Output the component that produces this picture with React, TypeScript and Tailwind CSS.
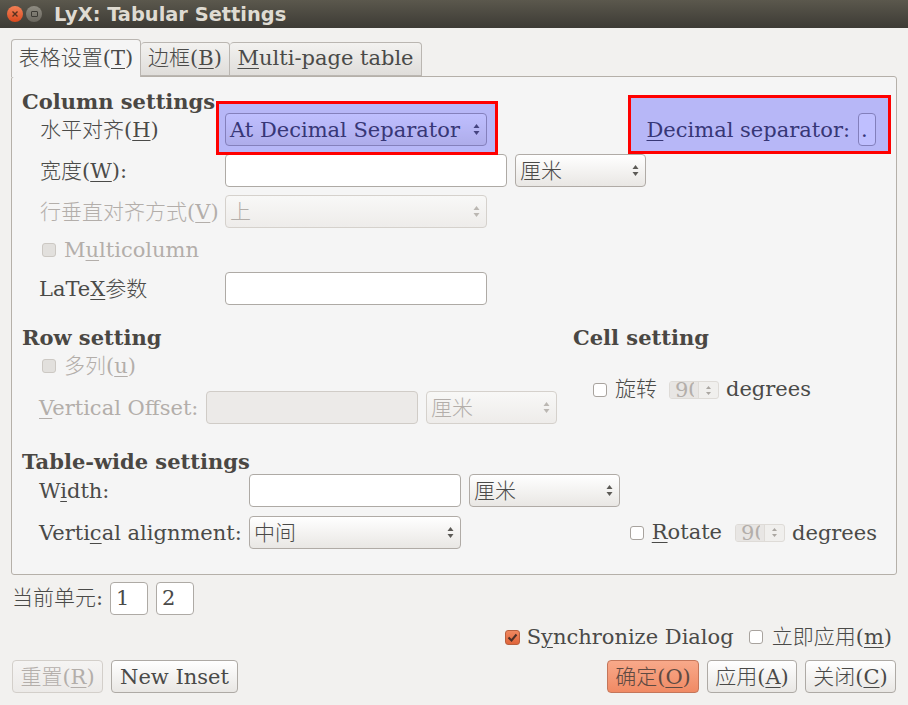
import React from 'react'

const Mn: React.FC<{ children: React.ReactNode }> = ({ children }) => (
  <span className="underline decoration-1 underline-offset-[3px]">{children}</span>
)

// labels sit one pixel under the centre of their row
const Lb: React.FC<{ className?: string; children: React.ReactNode }> = ({ className, children }) => (
  <div className={`pt-[2px] ${className || ''}`}>{children}</div>
)

const Arrows: React.FC<{ off?: boolean }> = ({ off }) => (
  <svg width="7" height="13" viewBox="0 0 7 13" className="shrink-0">
    <path d="M3.5 1 L6.5 5 H0.5 Z" fill={off ? '#bbb7b2' : '#5c5a56'} />
    <path d="M3.5 12 L6.5 8 H0.5 Z" fill={off ? '#bbb7b2' : '#5c5a56'} />
  </svg>
)

const Combo: React.FC<{ w: string; off?: boolean; children: React.ReactNode }> = ({ w, off, children }) => (
  <div
    className={`${w} h-[33px] shrink-0 flex items-center justify-between pl-[4px] pr-[6px] rounded-[4px] border bg-gradient-to-b ${
      off
        ? 'border-[#d5d1cc] from-[#f8f8f7] to-[#eeecea] text-[#b3aeaa]'
        : 'border-[#b0aba6] from-[#ffffff] to-[#e9e7e4] text-[#4a4a48]'
    }`}
  >
    <Lb>{children}</Lb>
    <Arrows off={off} />
  </div>
)

const Field: React.FC<{ w: string; off?: boolean; children?: React.ReactNode }> = ({ w, off, children }) => (
  <div
    className={`${w} h-[33px] shrink-0 flex items-center pl-[5px] rounded-[4px] border ${
      off ? 'border-[#d0ccc7] bg-[#eceae8]' : 'border-[#aeaaa5] bg-white'
    }`}
  >
    {children}
  </div>
)

const Check: React.FC<{ off?: boolean }> = ({ off }) => (
  <div
    className={`w-[14px] h-[14px] shrink-0 rounded-[3px] border ${
      off ? 'border-[#ccc8c3] bg-[#e2e0dd]' : 'border-[#a8a39e] bg-white'
    }`}
  />
)

// the value really is clipped in the dialog: the field is too narrow for "90"
const Spin: React.FC = () => (
  <div className="w-[50px] h-[18px] flex rounded-[3px] border border-[#dedbd7] bg-[#f0efed] overflow-hidden">
    <div className="w-[29px] bg-[#e8e6e4] border-r border-[#dedbd7] pl-[5px]">
      <div className="w-[19px] h-[16px] overflow-hidden text-[#b3aeaa] leading-[16px]">90</div>
    </div>
    <div className="flex-1 flex items-center justify-center">
      <svg width="7" height="11" viewBox="0 0 7 11">
        <path d="M3.5 1 L6 4 H1 Z" fill="#aaa6a1" />
        <path d="M3.5 10 L6 7 H1 Z" fill="#aaa6a1" />
      </svg>
    </div>
  </div>
)

const Btn: React.FC<{ w: string; kind?: 'off' | 'ok'; children: React.ReactNode }> = ({ w, kind, children }) => {
  const look =
    kind === 'off'
      ? 'border-[#d3cfca] from-[#f5f4f3] to-[#eceae8] text-[#b3aeaa]'
      : kind === 'ok'
        ? 'border-[#c4765a] from-[#f8a98a] to-[#f08a64] text-[#5e4a42]'
        : 'border-[#aeaaa5] from-[#ffffff] to-[#e9e7e4] text-[#4a4a48]'
  return (
    <div className={`${w} h-[33px] flex items-center justify-center rounded-[4px] border bg-gradient-to-b ${look}`}>
      <Lb>{children}</Lb>
    </div>
  )
}

const Heading: React.FC<{ children: React.ReactNode }> = ({ children }) => (
  <div className="h-[22px] flex items-center font-bold text-[#4a4743] whitespace-nowrap">{children}</div>
)

export default function App() {
  return (
    <div
      className="relative w-[908px] h-[705px] overflow-hidden bg-[#f2f1ef] text-[21px] font-light text-[#4a4a48]"
      style={{ fontFamily: '"DejaVu Serif", "Noto Sans CJK SC", serif' }}
    >
      {/* title bar */}
      <div className="h-[28px] flex items-center bg-gradient-to-b from-[#5b584d] to-[#3d3b35] pl-[7px]">
        <div className="w-[16px] h-[16px] rounded-full bg-gradient-to-b from-[#f28055] to-[#d9481c] flex items-center justify-center">
          <svg width="8" height="8" viewBox="0 0 8 8">
            <path d="M1.5 1.5 L6.5 6.5 M6.5 1.5 L1.5 6.5" stroke="#57311f" strokeWidth="1.4" />
          </svg>
        </div>
        <div className="ml-[3px] w-[16px] h-[16px] rounded-full bg-gradient-to-b from-[#8f8c82] to-[#6a675f] flex items-center justify-center">
          <div className="w-[7px] h-[6px] border border-[#3c3a35] rounded-[1px]" />
        </div>
        <div
          className="ml-[12px] pt-[2px] text-[19.4px] font-bold text-[#dfdbd2]"
          style={{ fontFamily: '"DejaVu Sans", sans-serif' }}
        >
          LyX: Tabular Settings
        </div>
      </div>

      <div className="px-[11px]">
        {/* tabs */}
        <div className="flex items-end pt-[11px] h-[49px] relative z-10 -mb-px">
          <div className="w-[130px] h-[38px] flex items-center justify-center rounded-t-[4px] border border-b-0 border-[#bab6b1] bg-[#f5f5f5]">
            <span>表格设置(<Mn>T</Mn>)</span>
          </div>
          <div className="w-[89px] h-[34px] mb-px flex items-center justify-center rounded-t-[4px] border border-l-0 border-[#bab6b1] bg-gradient-to-b from-[#f3f2f0] to-[#dfddda]">
            <span>边框(<Mn>B</Mn>)</span>
          </div>
          <div className="w-[192px] h-[34px] mb-px flex items-center justify-center rounded-t-[4px] border border-l-0 border-[#bab6b1] bg-gradient-to-b from-[#f3f2f0] to-[#dfddda]">
            <span><Mn>M</Mn>ulti-page table</span>
          </div>
        </div>

        {/* panel */}
        <div className="h-[499px] rounded-[3px] border border-[#b5b0a9] bg-[#f5f5f5] pl-[10px] pr-[20px] pt-[14px]">
          <Heading>Column settings</Heading>
          <div className="pl-[17px] flex flex-col">
            <div className="flex items-center h-[33px]">
              <Lb className="w-[186px] pl-px">水平对齐(<Mn>H</Mn>)</Lb>
              <Combo w="w-[262px]">At Decimal Separator</Combo>
              <Lb className="ml-auto mr-[8px] whitespace-nowrap"><Mn>D</Mn>ecimal separator:</Lb>
              <Field w="w-[18px]">
                <Lb className="-ml-[3px]">.</Lb>
              </Field>
            </div>
            <div className="flex items-center h-[33px] mt-[8px]">
              <Lb className="w-[186px] pl-px">宽度(<Mn>W</Mn>):</Lb>
              <Field w="w-[282px]" />
              <div className="ml-[8px]"><Combo w="w-[131px]">厘米</Combo></div>
            </div>
            <div className="flex items-center h-[33px] mt-[8px] text-[#b3aeaa]">
              <Lb className="w-[186px] pl-px whitespace-nowrap">行垂直对齐方式(<Mn>V</Mn>)</Lb>
              <Combo w="w-[262px]" off>上</Combo>
            </div>
            <div className="flex items-center h-[33px] mt-[5px] text-[#b3aeaa] pl-[3px]">
              <Check off />
              <Lb className="ml-[8px]">M<Mn>u</Mn>lticolumn</Lb>
            </div>
            <div className="flex items-center h-[33px] mt-[6px]">
              <Lb className="w-[186px]">LaTe<Mn>X</Mn>参数</Lb>
              <Field w="w-[262px]" />
            </div>
          </div>

          <div className="flex mt-[22px]">
            <div className="w-[551px]">
              <Heading>Row setting</Heading>
              <div className="pl-[20px] mt-[6px] h-[22px] flex items-center text-[#b3aeaa]">
                <Check off />
                <Lb className="ml-[8px]">多列(<Mn>u</Mn>)</Lb>
              </div>
              <div className="pl-[17px] mt-[14px] flex items-center h-[33px] text-[#b3aeaa]">
                <Lb className="w-[167px] whitespace-nowrap"><Mn>V</Mn>ertical Offset:</Lb>
                <Field w="w-[212px]" off />
                <div className="ml-[8px]"><Combo w="w-[131px]" off>厘米</Combo></div>
              </div>
            </div>
            <div>
              <Heading>Cell setting</Heading>
              <div className="pl-[20px] mt-[30px] h-[22px] flex items-center whitespace-nowrap">
                <Check />
                <div className="ml-[8px]">旋转</div>
                <div className="ml-[12px]"><Spin /></div>
                <div className="ml-[7px]">degrees</div>
              </div>
            </div>
          </div>

          <div className="mt-[27px]">
            <Heading>Table-wide settings</Heading>
            <div className="pl-[17px] mt-px flex items-center h-[33px]">
              <Lb className="w-[210px]">W<Mn>i</Mn>dth:</Lb>
              <Field w="w-[212px]" />
              <div className="ml-[8px]"><Combo w="w-[151px]">厘米</Combo></div>
            </div>
            <div className="pl-[17px] mt-[9px] flex items-center h-[33px] whitespace-nowrap">
              <Lb className="w-[210px]">Verti<Mn>c</Mn>al alignment:</Lb>
              <Combo w="w-[212px]">中间</Combo>
              <div className="ml-auto -mr-px flex items-center">
                <Check />
                <div className="ml-[8px]"><Mn>R</Mn>otate</div>
                <div className="ml-[13px]"><Spin /></div>
                <Lb className="ml-[7px]">degrees</Lb>
              </div>
            </div>
          </div>
        </div>
      </div>

      {/* current cell */}
      <div className="pl-[12px] mt-[7px] flex items-center h-[33px]">
        <div className="w-[98px]">当前单元:</div>
        <Field w="w-[38px]">1</Field>
        <div className="ml-[8px]"><Field w="w-[38px]">2</Field></div>
      </div>

      <div className="mt-[10px] h-[24px] pr-[16px] flex items-center justify-end whitespace-nowrap">
        <div className="w-[15px] h-[15px] rounded-[3px] border border-[#b9603e] bg-gradient-to-b from-[#f0885f] to-[#e0653a] flex items-center justify-center">
          <svg width="11" height="11" viewBox="0 0 11 11">
            <path d="M1.5 5.5 L4.5 8.5 L9.5 2.5" fill="none" stroke="#4e3128" strokeWidth="2" />
          </svg>
        </div>
        <Lb className="ml-[7px]">S<Mn>y</Mn>nchronize Dialog</Lb>
        <div className="ml-[15px]"><Check /></div>
        <Lb className="ml-[9px]">立即应用(<Mn>m</Mn>)</Lb>
      </div>

      <div className="mt-[11px] px-[12px] flex gap-[8px]">
        <Btn w="w-[91px]" kind="off">重置(<Mn>R</Mn>)</Btn>
        <Btn w="w-[127px]">New Inset</Btn>
        <div className="ml-auto"><Btn w="w-[92px]" kind="ok">确定(<Mn>O</Mn>)</Btn></div>
        <Btn w="w-[90px]">应用(<Mn>A</Mn>)</Btn>
        <Btn w="w-[91px]">关闭(<Mn>C</Mn>)</Btn>
      </div>

      {/* highlight overlays */}
      <div className="absolute left-[216px] top-[101px] w-[282px] h-[54px] border-[3px] border-[#ff0000] bg-[#0000ff]/25" />
      <div className="absolute left-[628px] top-[95px] w-[263px] h-[59px] border-[3px] border-[#ff0000] bg-[#0000ff]/25" />
    </div>
  )
}
